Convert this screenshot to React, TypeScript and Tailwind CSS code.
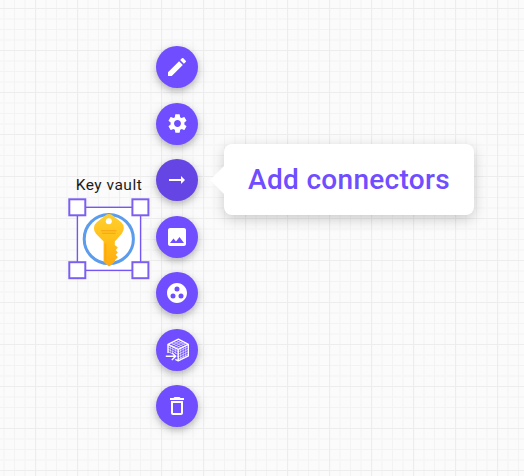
import type { ReactNode } from "react";
import { MdArrowRightAlt, MdDeleteOutline, MdEdit, MdGroupWork, MdImage, MdSettings } from "react-icons/md";

function Grid() {
  return (
    <svg className="absolute inset-0 h-full w-full" aria-hidden="true">
      <defs>
        <pattern id="grid" x="35" y="8" width="42" height="42" patternUnits="userSpaceOnUse">
          <path d="M11 0V42M32 0V42M0 11H42M0 32H42" stroke="#f6f6f6" strokeWidth="1.5" />
          <path d="M21.5 0V42M0 21.5H42" stroke="#f3f3f3" />
          <path d="M.6 0V42M0 .5H42" stroke="#ededed" strokeWidth="1.2" />
        </pattern>
      </defs>
      <rect width="100%" height="100%" fill="url(#grid)" />
    </svg>
  );
}

function CubeImportIcon() {
  return (
    <svg width="24" height="24" viewBox="0 0 24 24" fill="none" stroke="white" strokeLinejoin="round">
      <path
        d="M6 4.8l10 5M8.4 3.6l10 5M11 2.4l10 5M16 2.4 5.8 7.8M18.4 3.6 8.2 9M20.8 4.9 10.6 10.2M5.3 8v7M7.8 9.2v6M10.3 10.4V16M3 8.7l10.2 5.1M3 11.2l10.2 5.1M3 13.7l10.2 5M15.7 10.8v10.5M18.2 9.5v10.7M20.7 8.3V19M13.2 13.8l10.2-5.1M13.2 16.3l10.2-5.1M13.2 18.8l10.2-5.1M13.2 21.1l10.2-5"
        strokeWidth=".75"
        strokeOpacity=".75"
      />
      <path d="M3 15V6.3L13.4 1.2 23.4 6.3v11.6l-10.2 4.9-2.9-1.4M3 6.3l10.2 5.1L23.4 6.3M13.2 11.4v11.4" strokeWidth="1.4" />
      <path d="M2 18.3h8M7 15.2l3.4 3.1L7 21.4" stroke="#704dff" strokeWidth="3.2" />
      <path d="M.8 18.3h9.8M6.8 14.7l3.9 3.6-3.9 3.6" strokeWidth="1.4" />
    </svg>
  );
}

function ActionButton({ label, active = false, children }: { label: string; active?: boolean; children: ReactNode }) {
  return (
    <button
      aria-label={label}
      className={`flex size-[42px] items-center justify-center rounded-full text-white shadow-[0_3px_6px_rgba(0,0,0,0.2),0_3px_14px_rgba(0,0,0,0.12)] ${active ? "bg-[#6545e3]" : "bg-[#704dff]"}`}
    >
      {children}
    </button>
  );
}

function KeyNode() {
  return (
    <div className="absolute left-[68px] top-[175px] flex w-[82px] flex-col items-center">
      <div className="whitespace-nowrap text-[15.5px] leading-5 tracking-[0.5px] text-[#1c1c1c]">Key vault</div>
      <svg className="mt-[3px]" width="82" height="82" viewBox="0 0 82 82" role="img" aria-label="Key vault">
        <defs>
          <linearGradient id="gold" x1="0" y1="0" x2="0" y2="1">
            <stop offset="0" stopColor="#ffd02f" />
            <stop offset=".6" stopColor="#ffbc14" />
            <stop offset="1" stopColor="#ffab14" />
          </linearGradient>
        </defs>
        <rect x="9.4" y="9.3" width="63.2" height="63.1" fill="white" stroke="#7455f5" strokeWidth="1.4" />
        <circle cx="40.8" cy="41" r="24.6" fill="white" stroke="#5b9cec" strokeWidth="3" />
        <path
          d="M38.3 16.8Q41 15 43.7 16.8L53 24Q56 26.6 55.8 30.5Q55.5 33.6 53.5 36L46.8 43.5V47L49.8 49.6 47.8 52 49.8 54.4 47.8 56.8 49.8 59.2 47 62.2V63.5L42.2 67.8Q41.1 68.8 40 67.8L35.6 63.8V43.5L28 35.8Q26 33.6 26 30.5Q25.8 26.6 29 24Z"
          fill="url(#gold)"
        />
        <path d="M36.6 45.5h1.8v19l-1.8-1.6Z" fill="#ffa812" />
        <path d="M33 32.8h15.5M34 35.3h13.5" stroke="#f6a310" strokeWidth="1.1" />
        <circle cx="40.8" cy="23.2" r="3" fill="white" />
        <g fill="white" stroke="#7c5ff0" strokeWidth="2">
          <rect x="1.3" y="1.3" width="16" height="16" />
          <rect x="64.4" y="1.3" width="16" height="16" />
          <rect x="1.3" y="64.2" width="16" height="16" />
          <rect x="64.4" y="64.2" width="16" height="16" />
        </g>
      </svg>
    </div>
  );
}

export default function App() {
  return (
    <main className="relative h-[476px] w-[524px] overflow-hidden bg-[#fbfbfb] font-['Roboto','Liberation_Sans',sans-serif]">
      <Grid />
      <KeyNode />
      <div className="absolute left-[156px] top-[46.3px] flex flex-col gap-[14.5px]">
        <ActionButton label="Edit"><MdEdit size={24} /></ActionButton>
        <ActionButton label="Settings"><MdSettings size={23} /></ActionButton>
        <ActionButton label="Add connectors" active><MdArrowRightAlt size={24} /></ActionButton>
        <ActionButton label="Change image"><MdImage size={24} /></ActionButton>
        <ActionButton label="Group"><MdGroupWork size={24} /></ActionButton>
        <ActionButton label="Convert to 3D"><CubeImportIcon /></ActionButton>
        <ActionButton label="Delete"><MdDeleteOutline size={24} /></ActionButton>
      </div>
      <div className="absolute left-[224px] top-[144px] flex h-[71px] w-[250px] items-center justify-center rounded-lg bg-white text-[28px] font-medium tracking-[0.3px] text-[#704dff] shadow-[0_4px_14px_rgba(0,0,0,0.2)]">
        <svg className="absolute -left-[14px] top-[21px]" width="15" height="30" viewBox="0 0 15 30" fill="white">
          <path d="M0 15 15 0V30Z" />
        </svg>
        <span className="whitespace-nowrap">Add connectors</span>
      </div>
    </main>
  );
}
